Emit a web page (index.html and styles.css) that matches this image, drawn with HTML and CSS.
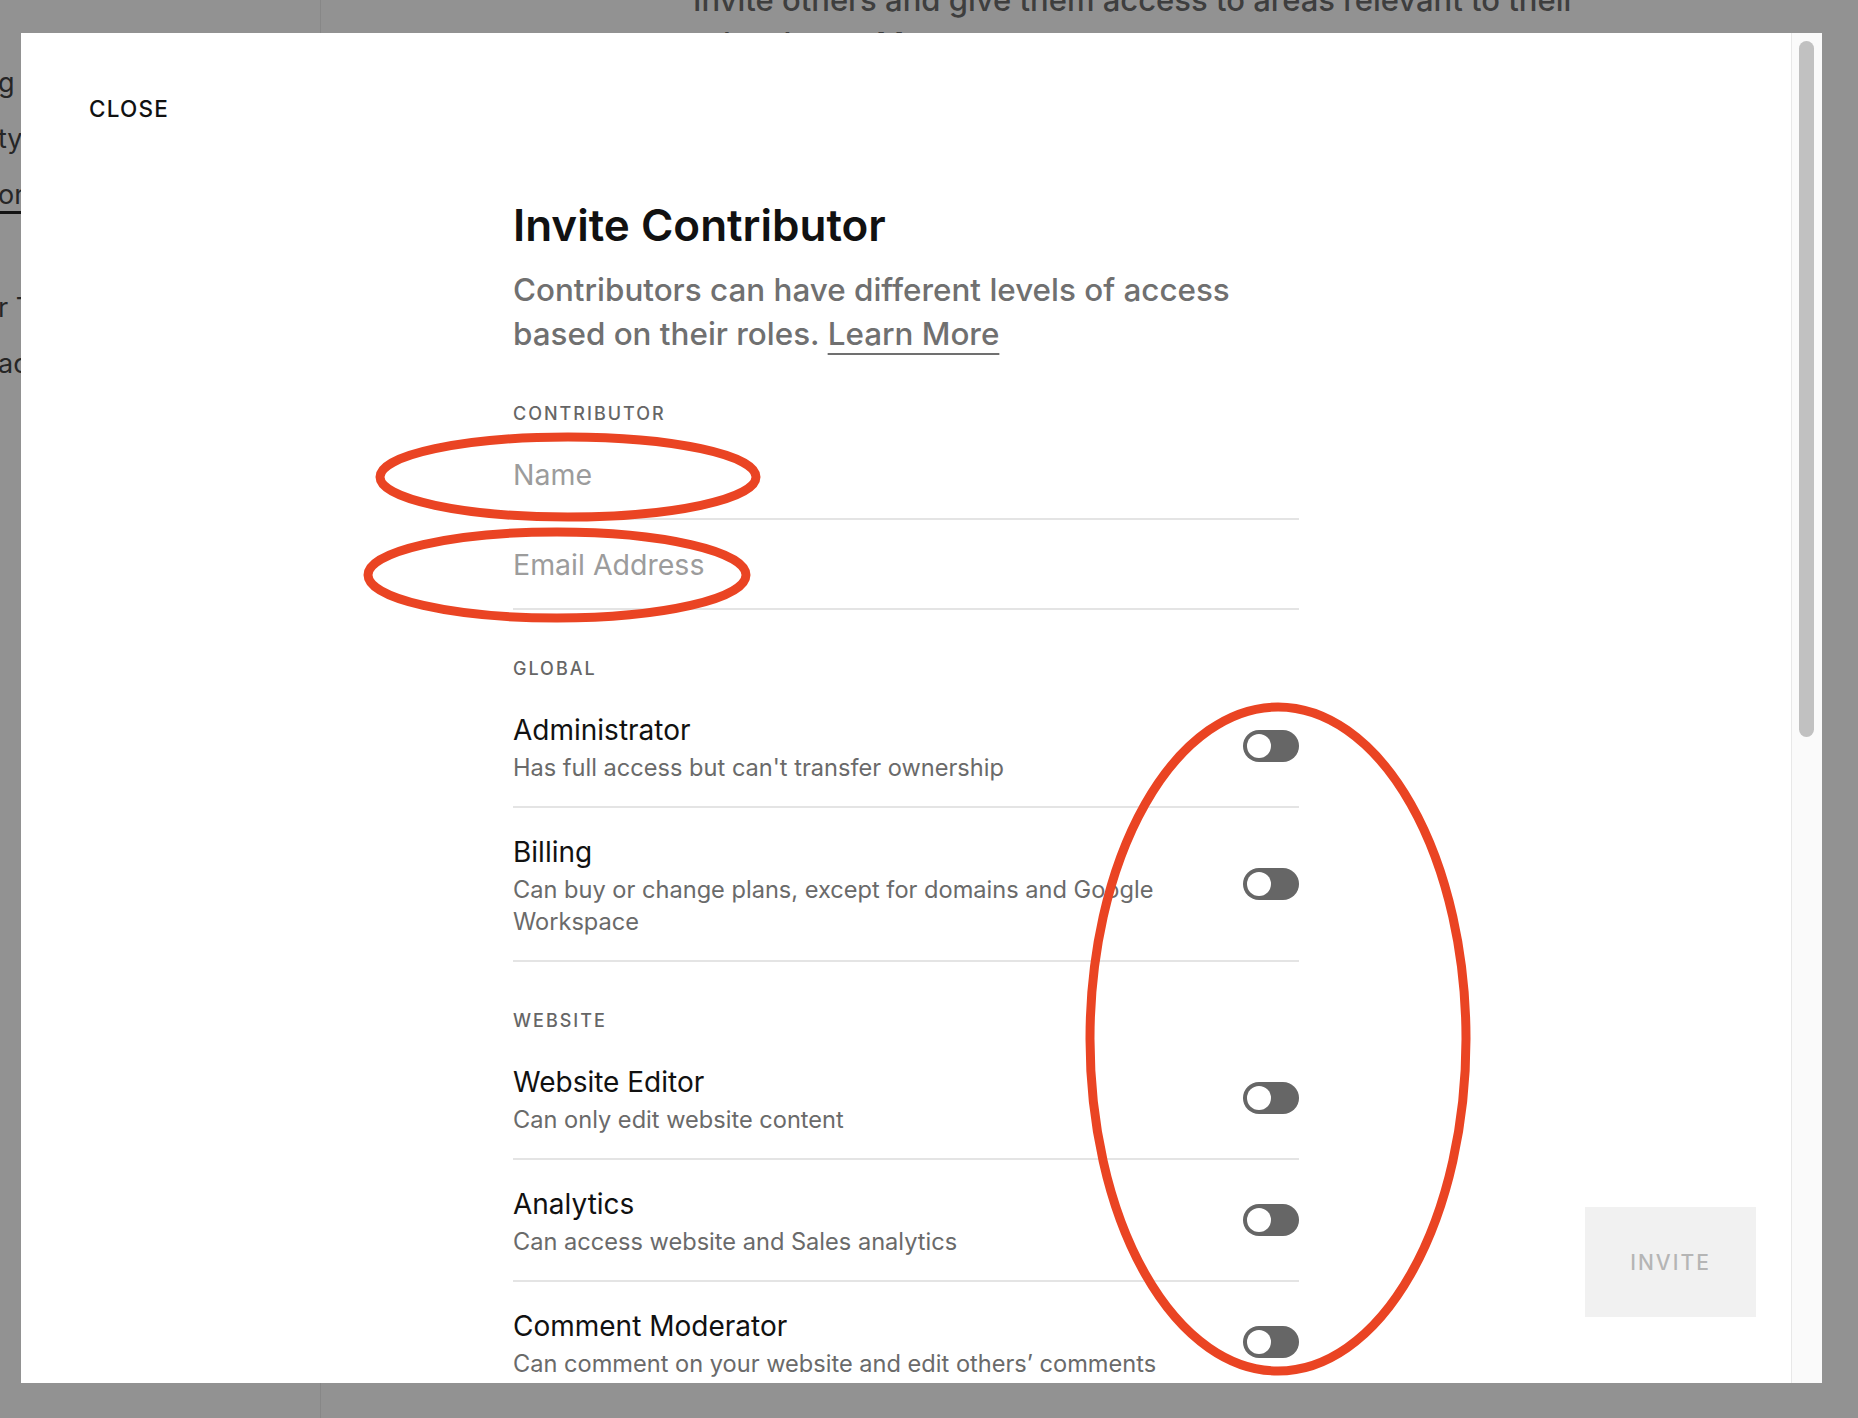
FILE: index.html
```html
<!DOCTYPE html>
<html lang="en">
<head>
<meta charset="utf-8">
<title>Invite Contributor</title>
<link rel="stylesheet" href="styles.css">
</head>
<body>
<div class="page">
  <aside class="sidebar">
    <ul class="nav">
      <li class="nav-item">g</li>
      <li class="nav-item">ty</li>
      <li class="nav-item"><span class="nav-active-text">on</span></li>
      <li class="nav-item nav-item-gap">r T</li>
      <li class="nav-item">ac</li>
    </ul>
  </aside>
  <main class="main">
    <p class="intro">Invite others and give them access to areas relevant to their<br>roles. Learn More</p>
  </main>
</div>

<div class="modal">
  <div class="modal-scroll">
    <div class="close">CLOSE</div>
    <div class="form">
      <h1 class="title">Invite Contributor</h1>
      <p class="lead">Contributors can have different levels of access based on their roles. <span class="lead-link">Learn More</span></p>

      <section class="group group-first">
        <div class="group-label">CONTRIBUTOR</div>
        <div class="field">Name</div>
        <div class="field">Email Address</div>
      </section>

      <section class="group">
        <div class="group-label">GLOBAL</div>
        <div class="row">
          <div class="row-text">
            <div class="row-title">Administrator</div>
            <div class="row-desc">Has full access but can't transfer ownership</div>
          </div>
          <div class="toggle"><div class="knob"></div></div>
        </div>
        <div class="row">
          <div class="row-text">
            <div class="row-title">Billing</div>
            <div class="row-desc">Can buy or change plans, except for domains and Google Workspace</div>
          </div>
          <div class="toggle"><div class="knob"></div></div>
        </div>
      </section>

      <section class="group">
        <div class="group-label">WEBSITE</div>
        <div class="row">
          <div class="row-text">
            <div class="row-title">Website Editor</div>
            <div class="row-desc">Can only edit website content</div>
          </div>
          <div class="toggle"><div class="knob"></div></div>
        </div>
        <div class="row">
          <div class="row-text">
            <div class="row-title">Analytics</div>
            <div class="row-desc">Can access website and Sales analytics</div>
          </div>
          <div class="toggle"><div class="knob"></div></div>
        </div>
        <div class="row">
          <div class="row-text">
            <div class="row-title">Comment Moderator</div>
            <div class="row-desc">Can comment on your website and edit others’ comments</div>
          </div>
          <div class="toggle"><div class="knob"></div></div>
        </div>
      </section>
    </div>
  </div>
  <div class="scrollbar"><div class="thumb"></div></div>
  <div class="invite">INVITE</div>
</div>

<svg class="annotations" width="1858" height="1418" viewBox="0 0 1858 1418" xmlns="http://www.w3.org/2000/svg">
  <ellipse cx="568" cy="477" rx="188" ry="40" fill="none" stroke="#ea4423" stroke-width="9"/>
  <ellipse cx="557" cy="575" rx="189" ry="43" fill="none" stroke="#ea4423" stroke-width="9"/>
  <ellipse cx="1278" cy="1039" rx="188" ry="332" fill="none" stroke="#ea4423" stroke-width="9"/>
</svg>
</body>
</html>
```

FILE: styles.css
```css
html, body {
  margin: 0;
  padding: 0;
}

body {
  width: 1858px;
  height: 1418px;
  overflow: hidden;
  position: relative;
  background: #929292;
  font-family: Inter, "Noto Sans", "Liberation Sans", sans-serif;
}

.page {
  display: flex;
  height: 100%;
}

.sidebar {
  width: 320px;
  flex: none;
  border-right: 1px solid #878787;
}

.nav {
  list-style: none;
  margin: 0;
  padding: 66px 0 0;
}

.nav-item {
  font-size: 27px;
  line-height: 34px;
  color: #262626;
  margin-bottom: 22px;
  text-indent: -2px;
  white-space: nowrap;
}

.nav-active-text {
  display: block;
  width: 80px;
  border-bottom: 3px solid #141414;
  line-height: 33px;
}

.nav-item-gap {
  margin-top: 77px;
}

.main {
  flex: 1;
  padding-left: 372px;
}

.intro {
  margin: -22px 0 0;
  width: 1000px;
  font-size: 31px;
  line-height: 44px;
  font-weight: 500;
  color: #3e3e3e;
}

.modal {
  position: absolute;
  left: 21px;
  top: 33px;
  width: 1801px;
  height: 1350px;
  background: #fff;
  display: flex;
  overflow: hidden;
}

.modal-scroll {
  flex: 1;
  padding-top: 64px;
}

.close {
  margin-left: 68px;
  font-size: 22.5px;
  line-height: 24px;
  font-weight: 500;
  letter-spacing: 1.2px;
  color: #111;
}

.form {
  width: 786px;
  margin: 80px auto 0;
}

.title {
  margin: 0;
  font-size: 44px;
  line-height: 48px;
  font-weight: 600;
  color: #111;
  letter-spacing: 0;
}

.lead {
  margin: 19px 0 0;
  max-width: 760px;
  font-size: 31.4px;
  line-height: 44px;
  font-weight: 500;
  color: #707070;
}

.lead-link {
  text-decoration: underline;
  text-decoration-thickness: 2px;
  text-underline-offset: 8px;
}

.group {
  margin-top: 49px;
}

.group-first {
  margin-top: 48px;
}

.group-label {
  font-size: 18px;
  line-height: 20px;
  font-weight: 500;
  letter-spacing: 2px;
  color: #666;
  margin-bottom: 7px;
}

.group-first .group-label {
  margin-bottom: 6px;
}

.field {
  padding: 28px 0 26px;
  border-bottom: 2px solid #e4e4e4;
  font-size: 28.5px;
  line-height: 34px;
  color: #9c9c9c;
}

.row {
  display: flex;
  align-items: center;
  justify-content: space-between;
  padding: 27px 0 22px;
  border-bottom: 2px solid #e4e4e4;
}

.row-text {
  max-width: 670px;
}

.row-title {
  font-size: 28px;
  line-height: 34px;
  color: #111;
}

.row-desc {
  margin-top: 5px;
  font-size: 23.6px;
  line-height: 32px;
  color: #6a6a6a;
}

.toggle {
  flex: none;
  width: 56px;
  height: 32px;
  border-radius: 16px;
  background: #666;
  margin-bottom: 5px;
  display: flex;
  align-items: center;
  padding-left: 4px;
  box-sizing: border-box;
}

.knob {
  width: 24px;
  height: 24px;
  border-radius: 50%;
  background: #fff;
}

.scrollbar {
  width: 30px;
  flex: none;
  background: #fafafa;
  border-left: 1px solid #e8e8e8;
}

.thumb {
  margin: 8px 0 0 7px;
  width: 15px;
  height: 696px;
  border-radius: 8px;
  background: #c1c1c1;
}

.invite {
  position: absolute;
  right: 66px;
  bottom: 66px;
  width: 171px;
  height: 110px;
  background: #f1f1f1;
  color: #b5b5b5;
  font-size: 21px;
  font-weight: 500;
  letter-spacing: 2px;
  display: flex;
  align-items: center;
  justify-content: center;
}

.annotations {
  position: absolute;
  left: 0;
  top: 0;
  pointer-events: none;
}
```
